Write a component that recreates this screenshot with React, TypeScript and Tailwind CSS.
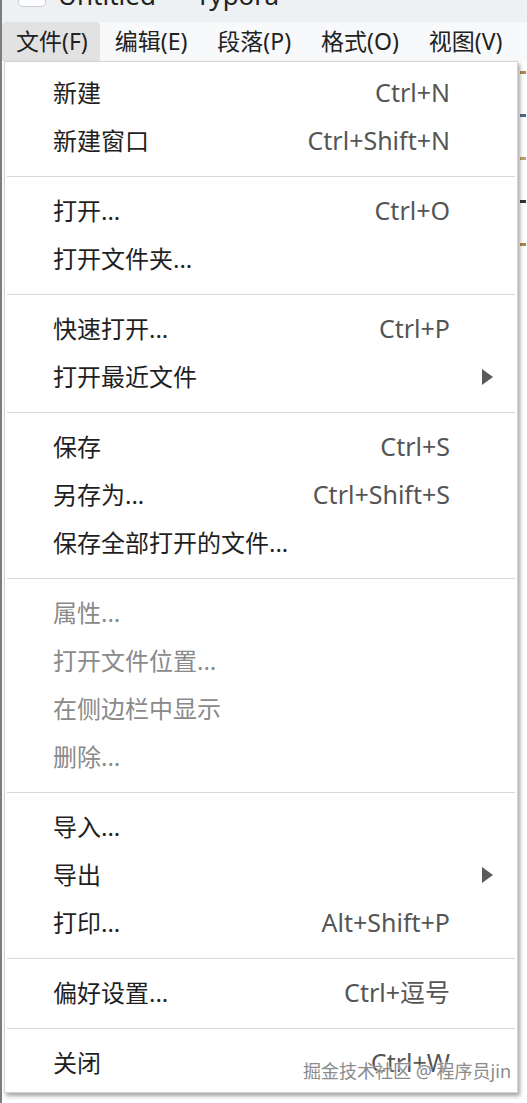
import { Fragment } from 'react';

type Item = { label: string; shortcut?: string; sub?: boolean; disabled?: boolean };

const groups: Item[][] = [
  [
    { label: '新建', shortcut: 'Ctrl+N' },
    { label: '新建窗口', shortcut: 'Ctrl+Shift+N' },
  ],
  [
    { label: '打开...', shortcut: 'Ctrl+O' },
    { label: '打开文件夹...' },
  ],
  [
    { label: '快速打开...', shortcut: 'Ctrl+P' },
    { label: '打开最近文件', sub: true },
  ],
  [
    { label: '保存', shortcut: 'Ctrl+S' },
    { label: '另存为...', shortcut: 'Ctrl+Shift+S' },
    { label: '保存全部打开的文件...' },
  ],
  [
    { label: '属性...', disabled: true },
    { label: '打开文件位置...', disabled: true },
    { label: '在侧边栏中显示', disabled: true },
    { label: '删除...', disabled: true },
  ],
  [
    { label: '导入...' },
    { label: '导出', sub: true },
    { label: '打印...', shortcut: 'Alt+Shift+P' },
  ],
  [{ label: '偏好设置...', shortcut: 'Ctrl+逗号' }],
  [{ label: '关闭', shortcut: 'Ctrl+W' }],
];

const menus = ['文件(F)', '编辑(E)', '段落(P)', '格式(O)', '视图(V)'];

const font = { fontFamily: '"Noto Sans", "Noto Sans CJK SC", sans-serif' };

function Row({ item }: { item: Item }) {
  return (
    <div className="flex h-[48px] items-center pl-[48px] pr-[67px]">
      <span className={`flex-1 text-[24px] ${item.disabled ? 'text-[#8a8a8a]' : 'text-[#1f1f1f]'}`}>{item.label}</span>
      {item.shortcut && <span className="text-[25px] text-[#555]">{item.shortcut}</span>}
      {item.sub && (
        <svg width="11" height="16" viewBox="0 0 11 16" className="-mr-[43px]">
          <path d="M0 0 L11 8 L0 16 Z" fill="#5a5a5a" />
        </svg>
      )}
    </div>
  );
}

export default function App() {
  return (
    <div className="relative h-[1103px] w-[527px] overflow-hidden bg-white" style={font}>
      <div className="border-l-2 border-[#7d7d7d] flex h-full flex-col">
        {/* title bar, cut off at top */}
        <div className="flex h-[22px] items-start gap-3 overflow-hidden bg-[#eef1f4] pl-[16px]">
          <div className="-mt-[13px] h-[20px] w-[28px] rounded-[5px] border border-[#c9cdd2] bg-white" />
          <span className="-mt-[18px] text-[26px] leading-none text-[#222]">Untitled — Typora</span>
        </div>
        {/* menu bar */}
        <div className="flex h-[39px] items-end bg-[#f8f9fa]">
          {menus.map((m, i) => (
            <div
              key={m}
              className={`flex h-[39px] items-center rounded-t-[4px] text-[23px] text-[#222] ${i === 0 ? 'bg-[#e2e2e2] pl-[14px] pr-[12px]' : 'px-[15px]'}`}
            >
              {m}
            </div>
          ))}
        </div>
        {/* body */}
        <div className="flex flex-1">
          <div className="z-10 ml-[2px] h-[1032px] w-[514px] border border-[#d4d4d4] bg-white pt-[7px] shadow-[2px_3px_4px_rgba(0,0,0,0.35)]">
            {groups.map((g, gi) => (
              <Fragment key={gi}>
                {gi > 0 && (
                  <div className="flex h-[22px] items-center px-[2px]">
                    <div className="h-px w-full bg-[#d9d9d9]" />
                  </div>
                )}
                {g.map((it) => (
                  <Row key={it.label} item={it} />
                ))}
              </Fragment>
            ))}
          </div>
          <div className="flex flex-1 flex-col gap-[40px] bg-white pt-[10px]">
            <div className="ml-[2px] h-[3px] w-[6px] bg-[#b0864a]" />
            <div className="ml-[2px] h-[3px] w-[6px] bg-[#4a6a8a]" />
            <div className="ml-[2px] h-[3px] w-[6px] bg-[#c0a070]" />
            <div className="ml-[2px] h-[3px] w-[6px] bg-[#333]" />
            <div className="ml-[2px] h-[3px] w-[6px] bg-[#b0864a]" />
          </div>
        </div>
      </div>
      <div
        className="absolute right-[16px] bottom-[18px] z-20 text-[18px] text-[#8b8b8b]"
        style={{ textShadow: '0 0 2px #fff, 0 0 2px #fff' }}
      >
        掘金技术社区 @ 程序员jin
      </div>
    </div>
  );
}
